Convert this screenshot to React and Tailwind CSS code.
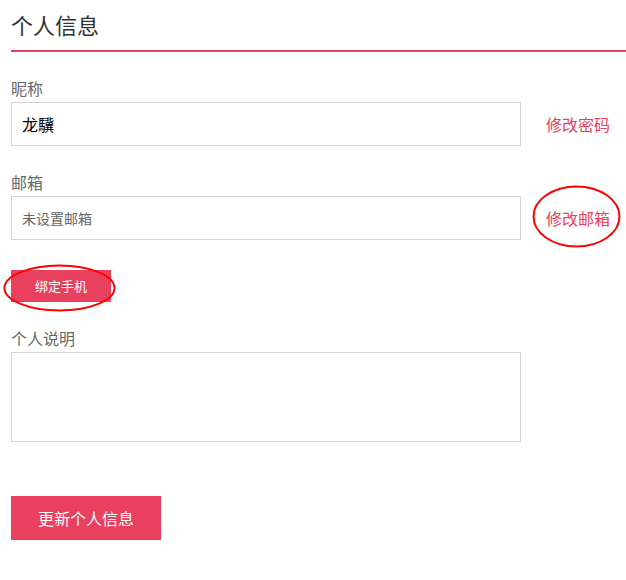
export default function App() {
  const font = { fontFamily: '"Noto Sans CJK SC", "Noto Sans", sans-serif' }

  return (
    <div className="relative w-[626px] min-h-[580px] bg-white" style={font}>
      {/* Header */}
      <div className="ml-[11px] border-b-2 border-[#e8405d] pt-[9px] pb-[11px]">
        <h2 className="text-[22px] leading-[30px] text-[#333]">个人信息</h2>
      </div>

      <div className="pl-[11px]">
        {/* 昵称 */}
        <div className="mt-[24px] mb-[2px] text-[16px] leading-[24px] text-[#666]">昵称</div>
        <div className="flex items-center gap-[25px]">
          <input
            className="w-[510px] h-[44px] border border-[#d4d4d4] px-[10px] text-[16px] text-black outline-none"
            defaultValue="龙驥"
            style={font}
          />
          <a className="text-[16px] text-[#e8405d] cursor-pointer">修改密码</a>
        </div>

        {/* 邮箱 */}
        <div className="mt-[24px] mb-[2px] text-[16px] leading-[24px] text-[#666]">邮箱</div>
        <div className="flex items-center gap-[25px]">
          <input
            className="w-[510px] h-[44px] border border-[#d4d4d4] px-[10px] text-[14px] text-[#555] placeholder:text-[#666] outline-none"
            placeholder="未设置邮箱"
            style={font}
          />
          <a className="text-[16px] text-[#e8405d] cursor-pointer">修改邮箱</a>
        </div>

        <button className="mt-[30px] w-[100px] h-[32px] bg-[#e8405d] text-white text-[13px]">绑定手机</button>

        {/* 个人说明 */}
        <div className="mt-[24px] mb-[2px] text-[16px] leading-[24px] text-[#666]">个人说明</div>
        <textarea
          className="block w-[510px] h-[90px] border border-[#d4d4d4] resize-none outline-none"
        />

        <button className="mt-[54px] w-[150px] h-[44px] bg-[#e8405d] text-white text-[16px]">更新个人信息</button>
      </div>

      {/* annotation ellipses */}
      <svg className="absolute left-0 top-0 pointer-events-none" width="626" height="580">
        <ellipse cx="576.5" cy="216.5" rx="43" ry="30" fill="none" stroke="#ff0000" strokeWidth="2" />
        <ellipse cx="59.5" cy="288" rx="55" ry="22.5" fill="none" stroke="#ff0000" strokeWidth="2" />
      </svg>
    </div>
  )
}
